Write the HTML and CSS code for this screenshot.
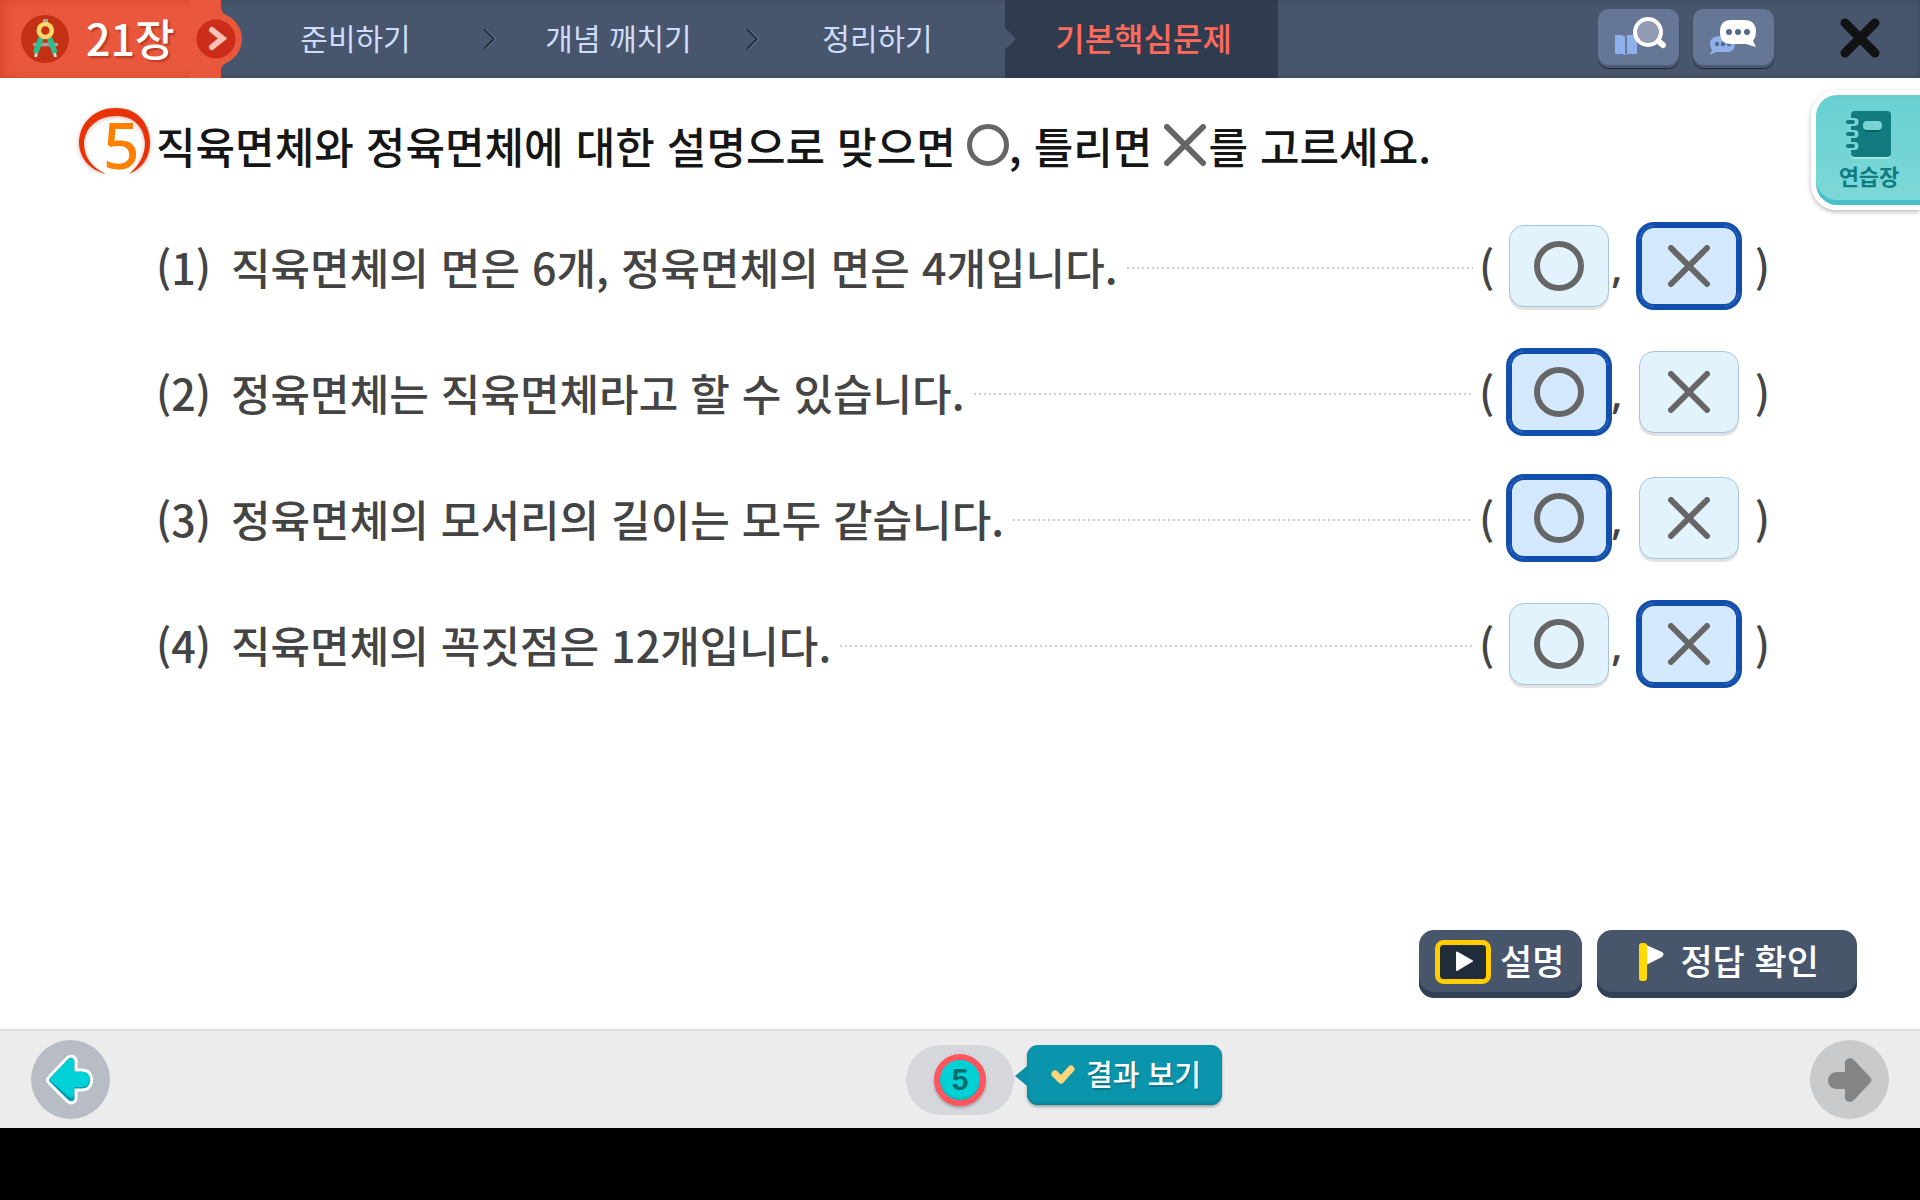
FILE: index.html
```html
<!DOCTYPE html>
<html lang="ko">
<head>
<meta charset="utf-8">
<meta name="viewport" content="width=device-width, initial-scale=1">
<title>21장 기본핵심문제</title>
<link rel="stylesheet" href="styles.css">
</head>
<body>
<svg width="0" height="0" class="sprite" aria-hidden="true">
  <symbol id="mark-o" viewBox="0 0 50 50"><circle cx="25" cy="25" r="22" fill="none" stroke="#666" stroke-width="6"/></symbol>
  <symbol id="mark-x" viewBox="0 0 42 42"><path d="M3 3 39 39M39 3 3 39" fill="none" stroke="#666" stroke-width="6" stroke-linecap="round"/></symbol>
</svg>

<header class="topbar">
  <button class="chapter" type="button">
    <svg class="chapter-icon" viewBox="0 0 48 48" aria-hidden="true">
      <circle cx="24" cy="24" r="24" fill="#c33014"/>
      <path d="M13.500 29.500H35.500" stroke="#a9a3a0" stroke-width="3.500" stroke-linecap="round"/>
      <rect x="22" y="4" width="5" height="6" fill="#a9a3a0"/>
      <path d="M16 36 14.500 42M33 36 34.500 42" stroke="#ddd5d0" stroke-width="3"/>
      <path d="M20 23 14.500 38M28.500 23 34 38" stroke="#2cbc8d" stroke-width="5.500"/>
      <circle cx="24.300" cy="15.500" r="6.500" fill="#c33014" stroke="#f9d86a" stroke-width="4.500"/>
    </svg>
    <span class="chapter-name">21장</span>
    <svg class="chapter-bump" viewBox="0 0 52 78" aria-hidden="true">
      <path d="M0 0H31V8Q31 13 38 16A26 26 0 0 1 38 62Q31 65 31 70V78H0Z" fill="#e9583d"/>
      <circle cx="26" cy="39" r="19.500" fill="#cb2d1a"/>
      <path d="M22 30 32.500 38.500 22 47" fill="none" stroke="#ffc0b5" stroke-width="6" stroke-linecap="round"/>
    </svg>
  </button>
  <nav class="steps" aria-label="학습 단계">
    <a href="#" class="step">준비하기<svg class="step-arrow" viewBox="0 0 14 22" aria-hidden="true"><path d="M2 1 12 11 2 21" fill="none" stroke="#7495cf" stroke-width="1.500"/><path d="M1 1 11 11 1 21" fill="none" stroke="#252c38" stroke-width="1.800"/></svg></a>
    <a href="#" class="step">개념 깨치기<svg class="step-arrow" viewBox="0 0 14 22" aria-hidden="true"><path d="M2 1 12 11 2 21" fill="none" stroke="#7495cf" stroke-width="1.500"/><path d="M1 1 11 11 1 21" fill="none" stroke="#252c38" stroke-width="1.800"/></svg></a>
    <a href="#" class="step step-last">정리하기</a>
    <a href="#" class="step step-current" aria-current="step">기본핵심문제</a>
  </nav>
  <div class="tools">
    <button class="tool" type="button" aria-label="용어 찾기">
      <svg width="54" height="42" viewBox="0 0 54 42" aria-hidden="true">
        <path d="M3 19h7l3 2 3-2h9v19h-9l-3 1-3-1H3Z" fill="#8fb0ea"/><path d="M14 21v17" stroke="#667695" stroke-width="2"/>
        <path d="M45 24 51 29" stroke="#fff" stroke-width="6" stroke-linecap="round"/>
        <circle cx="36" cy="16" r="13" fill="#929db4" stroke="#fff" stroke-width="4"/>
      </svg>
    </button>
    <button class="tool" type="button" aria-label="대화">
      <svg width="54" height="42" viewBox="0 0 54 42" aria-hidden="true">
        <path d="M14 20H20Q28 20 28 28T20 36H9L3 39 5 34Q3 31 3 28 3 20 14 20Z" fill="#8fb0ea"/>
        <g fill="#566888"><circle cx="10" cy="28" r="2.200"/><circle cx="16" cy="28" r="2.200"/><circle cx="22" cy="28" r="2.200"/></g>
        <path d="M24 4H37Q49 4 49 16 49 21 46 25L49 31 39 28H24Q13 28 13 16T24 4Z" fill="#fff"/>
        <g fill="#566888"><circle cx="22" cy="16" r="3"/><circle cx="31" cy="16" r="3"/><circle cx="40" cy="16" r="3"/></g>
      </svg>
    </button>
    <button class="close" type="button" aria-label="닫기">
      <svg width="40" height="40" viewBox="0 0 40 40" aria-hidden="true"><path d="M5 5 35 35M35 5 5 35" stroke="#111214" stroke-width="9" stroke-linecap="round"/></svg>
    </button>
  </div>
</header>

<main class="stage">
  <button class="notebook" type="button">
    <svg width="48" height="50" viewBox="0 0 48 50" aria-hidden="true">
      <rect x="6" y="3" width="40" height="46" rx="4" fill="#a6e5e4"/>
      <rect x="6" y="1" width="40" height="46" rx="4" fill="#127b7f"/>
      <rect x="18" y="12" width="19" height="10" rx="5" fill="#0c5f62"/><rect x="18" y="11" width="19" height="9" rx="4" fill="#79d5d5"/>
      <g stroke-linecap="round"><path d="M5 12H9.500M5 24H9.500M5 36H9.500" stroke="#79d5d5" stroke-width="8"/><path d="M3 12H8M3 24H8M3 36H8" stroke="#127b7f" stroke-width="4"/></g>
    </svg>
    <span>연습장</span>
  </button>

  <h1 class="question">
    <span class="question-no">
      <svg class="ring" viewBox="0 0 72 68" aria-hidden="true"><path d="M27 66C10 62 0 49 0 34 1 13 17 0 37 0 59 0 71 16 71 35 71 49 63 61 50 66 60 58 66 47 66 35 65 18 54 8 37 8 18 8 6 20 5 35 5 49 13 60 27 66Z" fill="#e93206"/></svg>
      <span>5</span>
    </span>
    <span>직육면체와 정육면체에 대한 설명으로 맞으면</span>
    <svg class="inline-mark mark-circle" role="img" aria-label="동그라미"><use href="#mark-o"/></svg>
    <span>, 틀리면</span>
    <svg class="inline-mark mark-cross" role="img" aria-label="엑스"><use href="#mark-x"/></svg>
    <span>를 고르세요.</span>
  </h1>

  <ol class="items">
    <li class="item">
      <span class="item-no">(1)</span><span>직육면체의 면은 6개, 정육면체의 면은 4개입니다.</span><span class="leader"></span>
      <span class="choices"><span>(</span>
        <label class="choice"><input type="radio" name="q1" aria-label="맞음"><svg width="50" height="50"><use href="#mark-o"/></svg></label><span class="comma">,</span>
        <label class="choice"><input type="radio" name="q1" aria-label="틀림" checked><svg width="42" height="42"><use href="#mark-x"/></svg></label><span class="end">)</span></span>
    </li>
    <li class="item">
      <span class="item-no">(2)</span><span>정육면체는 직육면체라고 할 수 있습니다.</span><span class="leader"></span>
      <span class="choices"><span>(</span>
        <label class="choice"><input type="radio" name="q2" aria-label="맞음" checked><svg width="50" height="50"><use href="#mark-o"/></svg></label><span class="comma">,</span>
        <label class="choice"><input type="radio" name="q2" aria-label="틀림"><svg width="42" height="42"><use href="#mark-x"/></svg></label><span class="end">)</span></span>
    </li>
    <li class="item">
      <span class="item-no">(3)</span><span>정육면체의 모서리의 길이는 모두 같습니다.</span><span class="leader"></span>
      <span class="choices"><span>(</span>
        <label class="choice"><input type="radio" name="q3" aria-label="맞음" checked><svg width="50" height="50"><use href="#mark-o"/></svg></label><span class="comma">,</span>
        <label class="choice"><input type="radio" name="q3" aria-label="틀림"><svg width="42" height="42"><use href="#mark-x"/></svg></label><span class="end">)</span></span>
    </li>
    <li class="item">
      <span class="item-no">(4)</span><span>직육면체의 꼭짓점은 12개입니다.</span><span class="leader"></span>
      <span class="choices"><span>(</span>
        <label class="choice"><input type="radio" name="q4" aria-label="맞음"><svg width="50" height="50"><use href="#mark-o"/></svg></label><span class="comma">,</span>
        <label class="choice"><input type="radio" name="q4" aria-label="틀림" checked><svg width="42" height="42"><use href="#mark-x"/></svg></label><span class="end">)</span></span>
    </li>
  </ol>

  <div class="actions">
    <button class="action action-explain" type="button">
      <svg width="56" height="44" viewBox="0 0 56 44" aria-hidden="true"><rect x="2.500" y="2.500" width="51" height="39" rx="6" fill="#212c3a" stroke="#ffcd00" stroke-width="5"/><path d="M22 12.500 37 21 22 30Z" fill="#fff" stroke="#fff" stroke-width="2" stroke-linejoin="round"/></svg>
      <span>설명</span>
    </button>
    <button class="action action-check" type="button">
      <svg width="26" height="40" viewBox="0 0 26 40" aria-hidden="true"><path d="M7 3 23 10Q26 12 23 15L7 23Z" fill="#fff"/><rect x="0" y="1" width="8" height="38" rx="3" fill="#ffd900"/></svg>
      <span>정답 확인</span>
    </button>
  </div>
</main>

<footer class="bottombar">
  <button class="pager" type="button" aria-label="이전">
    <svg width="52" height="54" viewBox="0 0 52 54" aria-hidden="true">
      <path d="M4 24 22 5C27 1 32 5 31 10V17H37C50 17 50 37 37 37H31V43C32 49 27 52 22 48L4 30Q1 27 4 24Z" fill="#009fae" stroke="#fff" stroke-width="3"/>
      <path d="M6 24 23 7C26 4 30 6 29 10V19H38C47 20 47 32 38 34H29V40C29 45 26 46 23 43L6 28Q4 26 6 24Z" fill="#00d2d8"/>
    </svg>
  </button>
  <div class="progress"><button class="page-no" type="button" aria-current="page">5</button></div>
  <div class="bottom-right">
    <button class="result" type="button">
      <svg width="24" height="20" viewBox="0 0 24 20" aria-hidden="true"><path d="M4 9 10 15 20 4" fill="none" stroke="#ffd57c" stroke-width="7" stroke-linecap="round" stroke-linejoin="round"/></svg>
      <span>결과 보기</span>
    </button>
    <button class="pager pager-off" type="button" aria-label="다음" disabled>
      <svg width="44" height="44" viewBox="0 0 44 44" aria-hidden="true"><path d="M42 19 26 2C21-2 16 2 17 7V14H9C-3 14-3 31 9 31H17V37C16 43 21 46 26 42L42 25Q45 22 42 19Z" fill="#848484"/></svg>
    </button>
  </div>
</footer>
</body>
</html>
```
FILE: styles.css
```css
* { box-sizing: border-box; }

body {
  margin: 0;
  min-height: 100vh;
  padding-bottom: 72px;
  display: flex;
  flex-direction: column;
  background: #000;
  font-family: "Noto Sans CJK KR", sans-serif;
  font-weight: 500;
}

button {
  border: 0;
  padding: 0;
  margin: 0;
  background: none;
  font: inherit;
  cursor: pointer;
}

svg { display: block; flex: none; }
.sprite { position: absolute; }

/* Top bar */
.topbar {
  display: flex;
  height: 78px;
  background: #48566d;
  box-shadow: inset 0 0 6px rgba(30, 40, 60, .35);
}

.chapter {
  position: relative;
  z-index: 1;
  flex: none;
  display: flex;
  align-items: center;
  gap: 17px;
  width: 221px;
  padding-left: 21px;
  background: #e9583d;
  box-shadow: inset 3px 0 12px rgba(190, 40, 20, .4);
  color: #fff;
}
.chapter-icon { width: 48px; height: 48px; }
.chapter-name {
  padding-bottom: 4px;
  font-size: 43px;
  line-height: 60px;
  text-shadow: 2px 2px 2px #b93a24;
}
.chapter-bump {
  position: absolute;
  left: 190px;
  top: 0;
  width: 52px;
  height: 78px;
}

.steps {
  display: flex;
  flex: 0 1 1057px;
  padding-left: 3px;
}
.step {
  position: relative;
  flex: 264 1 0;
  display: flex;
  align-items: center;
  justify-content: center;
  padding-bottom: 4px;
  font-size: 30px;
  line-height: 44px;
  font-weight: 400;
  color: #cfdcfb;
  text-decoration: none;
  white-space: nowrap;
}
.step-arrow {
  position: absolute;
  right: -10px;
  top: 28px;
  width: 14px;
  height: 22px;
}
.step-last { flex-grow: 256; }
.step-current {
  flex-grow: 270;
  background: #2f3c50;
  padding-left: 4px;
  font-size: 32px;
  font-weight: 500;
  color: #ff6a5a;
}
.step-current::before {
  content: "";
  position: absolute;
  left: 0;
  top: 28px;
  border: 11px solid transparent;
  border-left-color: #48566d;
  border-right: 0;
}

.tools {
  display: flex;
  align-items: flex-start;
  gap: 14px;
  margin-left: auto;
  padding: 9px 40px 0 0;
}
.tool {
  width: 81px;
  height: 56px;
  padding: 7px 14px;
  border-radius: 11px;
  background: #667695;
  box-shadow: 0 3px 0 #4c5a76, 0 4px 1px #20252e;
}
.close { margin: 9px 0 0 52px; }

/* Question */
.stage {
  position: relative;
  flex: 1 0 auto;
  display: flex;
  flex-direction: column;
  padding: 27px 63px 31px 80px;
  background: #fff;
}

.notebook {
  position: absolute;
  right: 0;
  top: 12px;
  width: 109px;
  height: 120px;
  display: flex;
  flex-direction: column;
  align-items: center;
  padding: 15px 0 0 2px;
  border: 5px solid #fff;
  border-right: 0;
  border-radius: 26px 0 0 26px;
  background: linear-gradient(#68cfd1, #7ed9d8);
  box-shadow: 0 2px 5px rgba(0, 0, 0, .28), inset 0 -5px 0 #47c1c7;
  font-size: 22px;
  line-height: 30px;
  font-weight: 700;
  color: #0f7d80;
}

.question {
  display: flex;
  align-items: center;
  height: 80px;
  margin: 0;
  font-size: 43px;
  line-height: 60px;
  font-weight: 500;
  color: #161616;
  white-space: nowrap;
}
.question-no {
  position: relative;
  width: 76px;
  height: 80px;
  padding-left: 23px;
  font-family: "Noto Sans", sans-serif;
  font-size: 64px;
  line-height: 80px;
  color: #ff7f00;
}
.ring {
  position: absolute;
  left: -1px;
  top: 3px;
  width: 72px;
  height: 68px;
  filter: drop-shadow(0 1px 2px rgba(120, 60, 40, .4));
}
.inline-mark { height: 42px; width: 42px; }
.mark-circle { margin-left: 11px; }
.mark-cross { margin: 0 2px 0 12px; }

.items {
  display: flex;
  flex-direction: column;
  gap: 44px;
  margin: 40px 87px 0 76px;
  padding: 0;
  list-style: none;
}
.item {
  display: flex;
  align-items: center;
  height: 82px;
  font-size: 43px;
  line-height: 60px;
  color: #444;
  white-space: nowrap;
}
.item-no { width: 75px; }
.leader {
  flex: 1;
  height: 2px;
  margin: 4px 6px 0 9px;
  background: repeating-linear-gradient(90deg, #ccc 0 2px, #fff 2px 5px);
}
.choices {
  display: grid;
  grid-template-columns: 30px 100px 30px 100px 31px;
  align-items: center;
}
.comma {
  padding-left: 2px;
  font-family: "Noto Sans", sans-serif;
}
.end { text-align: right; }
.choice {
  display: grid;
  place-items: center;
  height: 82px;
  cursor: pointer;
}
.choice > * { grid-area: 1 / 1; }
.choice input {
  appearance: none;
  width: 100%;
  height: 100%;
  margin: 0;
  border: 1px solid #a5c4de;
  border-radius: 15px;
  background: #e2f3fe;
  box-shadow: 0 3px 1px #e2e2e2;
}
.choice input:checked {
  border-color: #124fac;
  background: #d4e8fe;
  box-shadow: 0 0 0 3px #124fac, inset 0 0 0 2px #124fac;
}
.choice svg { pointer-events: none; }

.actions {
  display: flex;
  justify-content: flex-end;
  gap: 15px;
  margin-top: auto;
}
.action {
  display: flex;
  align-items: center;
  height: 68px;
  padding-bottom: 4px;
  border-radius: 15px;
  background: #48566b;
  box-shadow: inset 0 -6px 0 #314056;
  font-size: 35px;
  line-height: 50px;
  color: #fff;
}
.action span { padding-bottom: 4px; }
.action-explain { gap: 9px; padding-left: 16px; padding-right: 18px; }
.action-check { gap: 15px; padding-left: 42px; padding-right: 38px; }

/* Bottom bar */
.bottombar {
  display: grid;
  grid-template-columns: 1fr auto 1fr;
  align-items: center;
  height: 99px;
  padding: 0 31px;
  border-top: 2px solid #dedede;
  background: #ececec;
}
.pager {
  display: grid;
  place-items: center;
  width: 79px;
  height: 79px;
  border-radius: 50%;
  background: #b8bdc5;
}
.pager-off { background: #c9cacc; }
.progress {
  display: grid;
  place-items: center;
  width: 108px;
  height: 70px;
  border-radius: 35px;
  background: #d5d7dc;
}
.page-no {
  width: 52px;
  height: 52px;
  border: 6px solid #ff555e;
  border-radius: 50%;
  background: #00d2d5;
  box-shadow: 0 2px 3px rgba(0, 0, 0, .25), inset 0 -2px 2px #00b3b8;
  font-family: Inter, sans-serif;
  font-size: 28px;
  line-height: 40px;
  font-weight: 700;
  color: #076b6e;
}
.bottom-right {
  display: flex;
  justify-content: space-between;
  align-items: center;
  padding-left: 13px;
}
.result {
  position: relative;
  display: flex;
  align-items: center;
  gap: 11px;
  height: 60px;
  margin-bottom: 10px;
  padding: 0 21px 0 24px;
  border-radius: 11px;
  background: #0b95ac;
  box-shadow: 0 2px 3px rgba(0, 0, 0, .3), inset 0 -2px 3px #087f94;
  font-size: 29px;
  line-height: 40px;
  color: #fff;
  text-shadow: 1px 2px 1px #08788c;
}
.result span { padding-bottom: 4px; }
.result::before {
  content: "";
  position: absolute;
  left: -12px;
  top: 21px;
  border: 10px solid transparent;
  border-right: 12px solid #0b8fa6;
  border-left: 0;
}
```
